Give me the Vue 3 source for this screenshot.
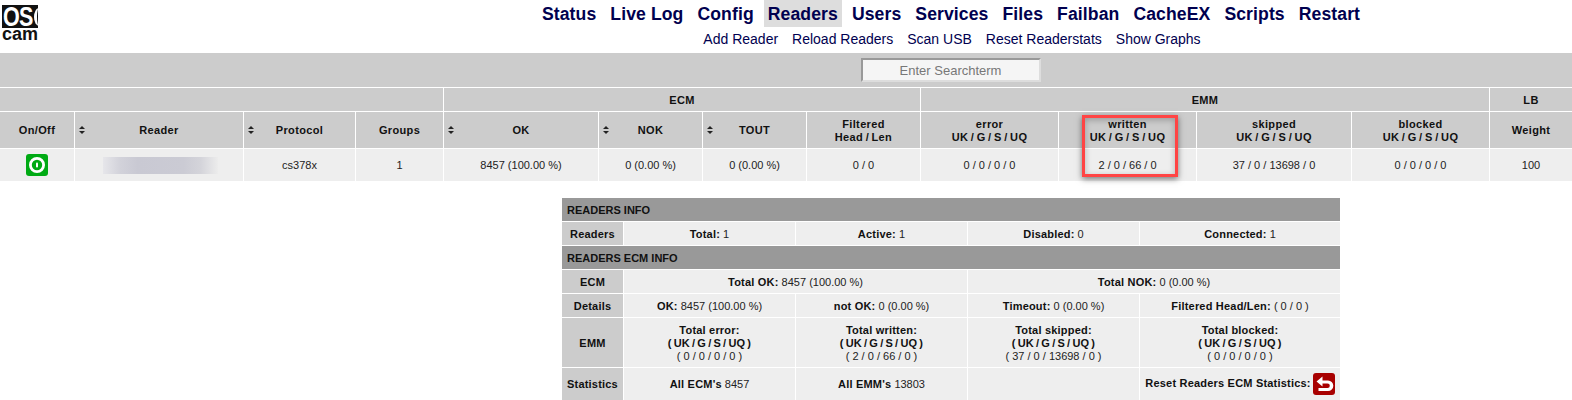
<script setup>
const nav = ['Status','Live Log','Config','Readers','Users','Services','Files','Failban','CacheEX','Scripts','Restart']
const sub = ['Add Reader','Reload Readers','Scan USB','Reset Readerstats','Show Graphs']
const heads = [
  { t:'OK', s:true },
  { t:'NOK', s:true },
  { t:'TOUT', s:true },
  { t:'Filtered', u:'Head / Len' },
  { t:'error', u:'UK / G / S / UQ' },
  { t:'written', u:'UK / G / S / UQ' },
  { t:'skipped', u:'UK / G / S / UQ' },
  { t:'blocked', u:'UK / G / S / UQ' },
]
const vals = ['8457 (100.00 %)','0 (0.00 %)','0 (0.00 %)','0 / 0','0 / 0 / 0 / 0','2 / 0 / 66 / 0','37 / 0 / 13698 / 0','0 / 0 / 0 / 0']
const widths = [74,169,112,88,155,104,104,114,138,138,155,138,83]
const details = [['OK:','8457 (100.00 %)'],['not OK:','0 (0.00 %)'],['Timeout:','0 (0.00 %)'],['Filtered Head/Len:','( 0 / 0 )']]
const emm = [['Total error:','( 0 / 0 / 0 / 0 )'],['Total written:','( 2 / 0 / 66 / 0 )'],['Total skipped:','( 37 / 0 / 13698 / 0 )'],['Total blocked:','( 0 / 0 / 0 / 0 )']]
</script>

<template>
  <div class="page">
    <header class="top">
      <div class="logo">
        <div class="os"><span>OS</span><i class="arc"></i></div>
        <div class="cam">cam</div>
      </div>
      <nav class="navs">
        <ul class="main">
          <li v-for="n in nav" :key="n" :class="{ on: n === 'Readers' }">{{ n }}</li>
        </ul>
        <ul class="subs">
          <li v-for="s in sub" :key="s">{{ s }}</li>
        </ul>
      </nav>
    </header>

    <div class="searchbar"><input class="search" placeholder="Enter Searchterm" /></div>

    <div class="tablewrap">
      <table class="readers">
        <colgroup><col v-for="(w,i) in widths" :key="i" :style="{ width: w + 'px' }" /></colgroup>
        <thead>
          <tr class="group">
            <th colspan="4"></th>
            <th colspan="4">ECM</th>
            <th colspan="4">EMM</th>
            <th>LB</th>
          </tr>
          <tr class="cols">
            <th>On/Off</th>
            <th class="sort"><i class="arrows"></i>Reader</th>
            <th class="sort"><i class="arrows"></i>Protocol</th>
            <th>Groups</th>
            <th v-for="h in heads" :key="h.t" :class="{ sort: h.s }">
              <i v-if="h.s" class="arrows"></i>{{ h.t }}<template v-if="h.u"><br />{{ h.u }}</template>
            </th>
            <th>Weight</th>
          </tr>
        </thead>
        <tbody>
          <tr class="row">
            <td>
              <svg class="ico" width="22" height="22" viewBox="0 0 22 22">
                <rect width="22" height="22" rx="3" fill="#00aa14" />
                <circle cx="11" cy="11" r="6.6" fill="none" stroke="#fff" stroke-width="2.8" />
                <rect x="10" y="8.500" width="2" height="5" rx="1" fill="#fff" />
              </svg>
            </td>
            <td><div class="blur"></div></td>
            <td>cs378x</td>
            <td>1</td>
            <td v-for="(v,i) in vals" :key="i">{{ v }}</td>
            <td>100</td>
          </tr>
        </tbody>
      </table>
      <div class="mark"></div>
    </div>

    <table class="info">
      <colgroup>
        <col class="c0" /><col class="c1" /><col class="c2" /><col class="c3" /><col class="c4" />
      </colgroup>
      <tbody>
        <tr class="title"><td colspan="5">READERS INFO</td></tr>
        <tr>
          <th>Readers</th>
          <td><b>Total:</b> 1</td><td><b>Active:</b> 1</td><td><b>Disabled:</b> 0</td><td><b>Connected:</b> 1</td>
        </tr>
        <tr class="title"><td colspan="5">READERS ECM INFO</td></tr>
        <tr>
          <th>ECM</th>
          <td colspan="2"><b>Total OK:</b> 8457 (100.00 %)</td>
          <td colspan="2"><b>Total NOK:</b> 0 (0.00 %)</td>
        </tr>
        <tr>
          <th>Details</th>
          <td v-for="d in details" :key="d[0]"><b>{{ d[0] }}</b> {{ d[1] }}</td>
        </tr>
        <tr class="emm">
          <th>EMM</th>
          <td v-for="e in emm" :key="e[0]"><b>{{ e[0] }}<br /><span class="uk">( UK / G / S / UQ )</span></b><br />{{ e[1] }}</td>
        </tr>
        <tr class="stats">
          <th>Statistics</th>
          <td><b>All ECM's</b> 8457</td>
          <td><b>All EMM's</b> 13803</td>
          <td></td>
          <td class="reset">
            <b>Reset Readers ECM Statistics:</b>
            <svg class="ico back" width="22" height="22" viewBox="0 0 22 22">
              <rect width="22" height="22" rx="3" fill="#a80000" />
              <path d="M9.500 3.500 3.500 8.500l6 5V10.500h5a2.300 2.300 0 0 1 0 4.600H5.500v3h9.500a5.300 5.300 0 0 0 0-10.600H9.500z" fill="#fff" />
            </svg>
          </td>
        </tr>
      </tbody>
    </table>
  </div>
</template>

<style>
html, body { margin: 0; background: #fff; }
</style>

<style scoped>
.page { width: 1572px; height: 400px; overflow: hidden; font-family: "Liberation Sans", Arial, sans-serif; color: #222; }
.top { height: 53px; display: flex; }
.logo { flex: none; width: 36px; margin-left: 2px; padding-top: 5px; box-sizing: content-box; }
.os { width: 36px; height: 23px; background: #111; color: #fff; font-weight: 700; font-size: 28px; line-height: 24px; white-space: nowrap; letter-spacing: -1px; display: flex; align-items: center; overflow: hidden; }
.os span { flex: none; display: block; width: 31px; margin-left: 1px; transform: scaleX(.77); transform-origin: left center; }
.arc { flex: none; width: 10px; height: 18px; margin-left: 0; box-sizing: border-box; border-left: 3px solid #fff; border-radius: 50%; }
.cam { font-weight: 700; font-size: 18px; line-height: 13px; color: #111; }
.navs { flex: 1; padding-left: 292px; box-sizing: border-box; }
ul { list-style: none; margin: 0; padding: 0; display: flex; justify-content: center; }
.main { height: 27px; color: #00004f; font-weight: 700; font-size: 17.6px; letter-spacing: .1px; }
.main li { padding: 1px 4px 0; margin: 0 3px; height: 26px; line-height: 26px; white-space: nowrap; }
.main li.on { background: #ddd; }
.subs { height: 26px; color: #00004f; font-size: 14px; line-height: 24px; gap: 14px; padding-left: 2px; }
.searchbar { height: 34px; background: #ccc; display: flex; justify-content: center; align-items: center; padding-left: 329px; box-sizing: border-box; }
.search { width: 180px; height: 24px; box-sizing: border-box; border: 2px solid; border-color: #999 #ddd #ddd #999; background: #f5f5f5; font: 13px "Liberation Sans", Arial, sans-serif; text-align: center; padding: 0; outline: none; }
.search::placeholder { color: #777; opacity: 1; }
.tablewrap { position: relative; }
table { border-collapse: separate; border-spacing: 0; table-layout: fixed; }
.readers { width: 1572px; font-size: 11px; text-align: center; }
.readers th, .readers td { padding: 0; border-top: 1px solid #fff; border-left: 1px solid #fff; box-sizing: border-box; }
.readers th { background: #ccc; font-weight: 700; line-height: 13px; position: relative; letter-spacing: .35px; word-spacing: -.9px; color: #111; }
.readers td { background: #eee; height: 33px; }
.readers tr > :first-child { border-left: 0; }
.group th { height: 24px; padding-top: 1px; }
.cols th { height: 37px; padding-top: 1px; }
.arrows { position: absolute; left: 4px; top: 14px; width: 6px; height: 8px; }
.arrows::before, .arrows::after { content: ""; position: absolute; left: 0; border-left: 3px solid transparent; border-right: 3px solid transparent; }
.arrows::before { top: 0; border-bottom: 3px solid #222; }
.arrows::after { bottom: 0; border-top: 3px solid #222; }
.ico { display: block; }
.readers td .ico { margin: 0 auto; }
.blur { width: 115px; height: 17px; margin-left: 28px; background: linear-gradient(90deg, #e6e6ea 0%, #d2d2da 15%, #c9c9d3 30%, #cbcbd4 70%, #d4d4da 85%, #ececec 100%); }
.mark { position: absolute; left: 1082px; top: 28px; width: 96px; height: 62px; box-sizing: border-box; border: 3px solid #f44; box-shadow: 0 2px 6px rgba(0,0,0,.5), inset 0 2px 6px rgba(0,0,0,.25); }
.info { width: 778px; margin: 17px 0 0 562px; font-size: 11px; text-align: center; }
.c0 { width: 61px; }
.c1, .c2, .c3 { width: 172px; }
.c4 { width: 201px; }
.info th, .info td { height: 24px; padding: 0; box-sizing: border-box; border-bottom: 1px solid #fff; border-left: 1px solid #fff; }
.info tr > :first-child { border-left: 0; }
.info th { background: #ccc; font-weight: 700; letter-spacing: .2px; color: #111; }
.info td { background: #eee; }
.info b { font-weight: 700; letter-spacing: .2px; color: #111; }
.info .uk { word-spacing: -1.2px; }
.info .title td { background: #999; text-align: left; padding-left: 5px; font-weight: 700; color: #111; }
.info .emm th, .info .emm td { height: 50px; line-height: 13px; padding-top: 1px; }
.stats th, .stats td { height: 33px; }
.reset { white-space: nowrap; }
.reset .back { display: inline-block; vertical-align: middle; margin-left: 2px; }
</style>
